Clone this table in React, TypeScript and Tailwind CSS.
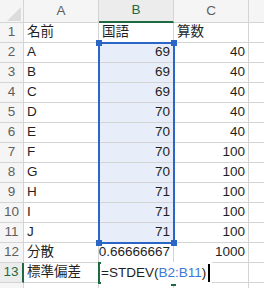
import React from "react";

const rows: [string, string, string][] = [
  ["名前", "国語", "算数"],
  ["A", "69", "40"],
  ["B", "69", "40"],
  ["C", "69", "40"],
  ["D", "70", "40"],
  ["E", "70", "40"],
  ["F", "70", "100"],
  ["G", "70", "100"],
  ["H", "71", "100"],
  ["I", "71", "100"],
  ["J", "71", "100"],
  ["分散", "0.66666667", "1000"],
  ["標準偏差", "", ""],
];

const font = { fontFamily: '"Liberation Sans", "Noto Sans CJK JP", sans-serif' };

export default function App() {
  return (
    <div className="relative w-[264px] h-[288px] overflow-hidden bg-white text-[13.5px] text-[#1f1f1f]" style={font}>
      <div className="grid grid-cols-[24px_75px_75px_75px_40px]">
        {/* header row */}
        <div className="relative h-[23px] bg-[#f5f5f5] border-r border-b border-[#d4d4d4]">
          <svg className="absolute left-[7px] top-[7px]" width="14" height="14" viewBox="0 0 14 14">
            <polygon points="14,0 14,14 0,14" fill="#dcdcdc" />
          </svg>
        </div>
        <div className="h-[23px] bg-[#f5f5f5] border-r border-b border-[#d4d4d4] flex items-center justify-center text-[#5f5f5f]">A</div>
        <div className="h-[23px] bg-[#ececec] border-r border-[#d4d4d4] border-b-2 border-b-[#1e6b41] flex items-center justify-center text-[#1e6b41]">B</div>
        <div className="h-[23px] bg-[#f5f5f5] border-r border-b border-[#d4d4d4] flex items-center justify-center text-[#5f5f5f]">C</div>
        <div className="h-[23px] bg-[#f5f5f5] border-r border-b border-[#d4d4d4]"></div>

        {rows.map((r, i) => {
          const n = i + 1;
          const isActive = n === 13;
          const isNum = n >= 2;
          return (
            <React.Fragment key={n}>
              <div
                className={
                  isActive
                    ? "h-[20px] bg-[#ececec] border-b border-[#d4d4d4] border-r-2 border-r-[#1e6b41] flex items-center justify-center text-[#1e6b41]"
                    : "h-[20px] bg-[#f5f5f5] border-r border-b border-[#d4d4d4] flex items-center justify-center text-[#5f5f5f]"
                }
              >
                {n}
              </div>
              <div className="h-[20px] border-r border-b border-[#d4d4d4] flex items-center pl-[3px] whitespace-nowrap">
                {r[0]}
              </div>
              <div
                className={
                  (n >= 2 && n <= 11 ? "bg-[#e8eef9] " : "") +
                  "h-[20px] border-r border-b border-[#d4d4d4] flex items-center whitespace-nowrap " +
                  (isNum ? "justify-end pr-[3px]" : "pl-[3px]")
                }
              >
                {r[1]}
              </div>
              <div
                className={
                  "h-[20px] border-r border-b border-[#d4d4d4] flex items-center whitespace-nowrap " +
                  (isNum ? "justify-end pr-[3px]" : "pl-[3px]")
                }
              >
                {r[2]}
              </div>
              <div className="h-[20px] border-r border-b border-[#d4d4d4]"></div>
            </React.Fragment>
          );
        })}
        {[0, 1, 2, 3, 4].map((k) => (
          <div key={k} className={"h-[20px] border-r border-b border-[#d4d4d4] " + (k === 0 ? "bg-[#f5f5f5]" : "")}></div>
        ))}
      </div>

      {/* selection B2:B11 */}
      <div className="absolute left-[98px] top-[42px] w-[77px] h-[202px] border-2 border-[#2b66c6] pointer-events-none"></div>
      <div className="absolute left-[96px] top-[40px] w-[6px] h-[6px] bg-[#2b66c6]"></div>
      <div className="absolute left-[171px] top-[40px] w-[6px] h-[6px] bg-[#2b66c6]"></div>
      <div className="absolute left-[96px] top-[240px] w-[6px] h-[6px] bg-[#2b66c6]"></div>
      <div className="absolute left-[171px] top-[240px] w-[6px] h-[6px] bg-[#2b66c6]"></div>

      {/* active cell B13 editing */}
      <div className="absolute left-[98px] top-[262px] w-[77px] h-[22px] border-2 border-r-0 border-[#1e6b41] bg-white"></div>
      <div className="absolute left-[171px] top-[281px] w-[5px] h-[5px] bg-[#1e6b41]"></div>
      <div className="absolute left-[101px] top-[262px] h-[22px] flex items-center whitespace-nowrap bg-white pr-[2px]">
        <span>=STDEV(</span>
        <span className="text-[#3d78d8]">B2:B11</span>
        <span>)</span>
        <span className="ml-[2px] inline-block w-[2px] h-[18px] bg-black"></span>
      </div>
    </div>
  );
}
